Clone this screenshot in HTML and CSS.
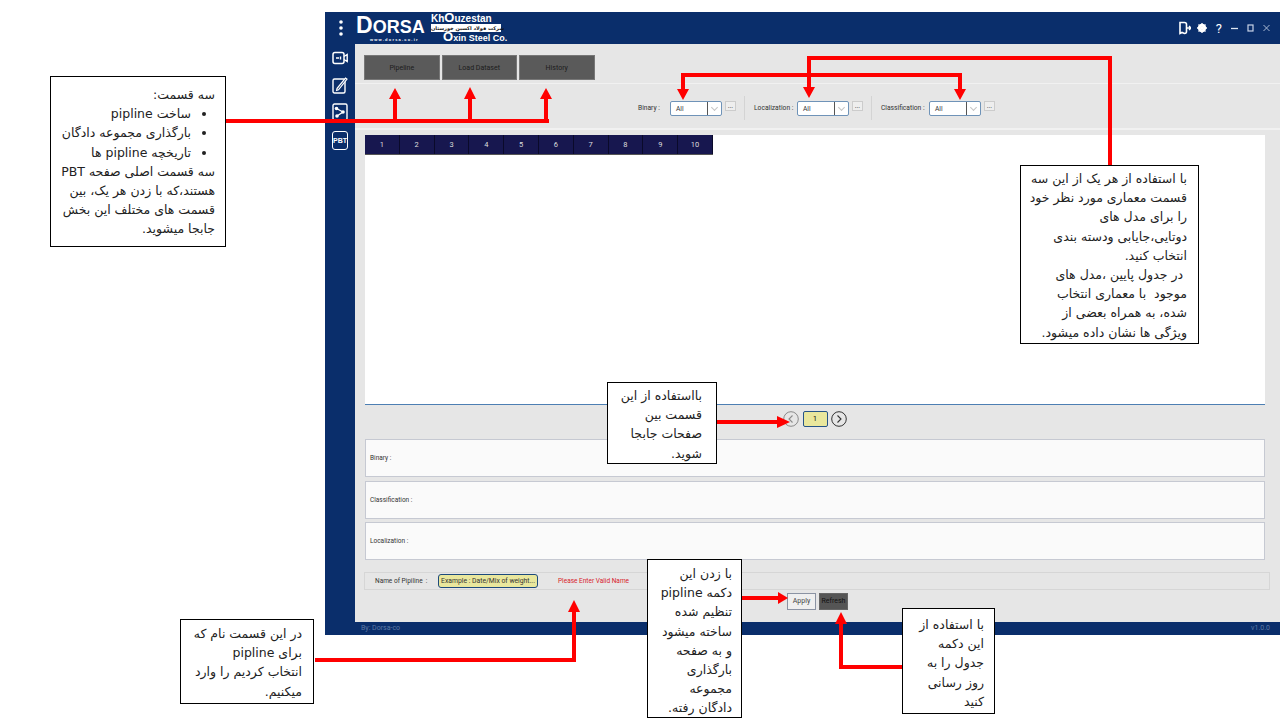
FILE: index.html
```html
<!DOCTYPE html>
<html>
  <head>
    <meta charset="utf-8">
    <link rel="stylesheet" href="styles.css">
  </head>
  <body>
    <div class="app">
      <div class="titlebar">
        <svg class="kebab" width="6" height="16" viewBox="0 0 6 16"><circle cx="3" cy="2" r="1.8"/><circle cx="3" cy="8" r="1.8"/><circle cx="3" cy="14" r="1.8"/></svg>
        <div class="dorsa">
          <span class="dorsa-name"><span class="dorsa-d">D</span>ORSA</span>
          <span class="dorsa-url">www.dorsa.co.ir</span>
        </div>
        <div class="oxin">
          <span class="oxin-top">Kh<span class="oxin-o">O</span>uzestan</span>
          <span class="oxin-fa">شرکت فولاد اکسین خوزستان</span>
          <span class="oxin-bottom"><span class="oxin-o">O</span>xin Steel Co.</span>
        </div>
        <div class="winbtns">
          <svg class="exit" width="12" height="14" viewBox="0 0 12 14"><path d="M1 1.5h4.5q2 0 2 2v7q0 2-2 2L3 11.5 1 12.5z" fill="none" stroke="#fff" stroke-width="1.6"/><path d="M7.5 7H12M10 5l2 2-2 2" fill="none" stroke="#fff" stroke-width="1.3"/></svg>
          <svg width="10" height="10" viewBox="0 0 10 10"><circle cx="5" cy="5" r="3" fill="none" stroke="#fff" stroke-width="2.4"/><path d="M5 0v10M0 5h10M1.5 1.5l7 7M8.5 1.5l-7 7" stroke="#fff" stroke-width="1.3"/></svg>
          <span class="help">?</span>
          <svg width="7" height="10" viewBox="0 0 7 10"><path d="M0 5.5h7" stroke="#dfe6f2" stroke-width="1.3"/></svg>
          <svg width="7" height="10" viewBox="0 0 7 10"><rect x="1" y="2" width="5" height="6" fill="none" stroke="#c8d3e6" stroke-width="1.2"/></svg>
          <svg width="7" height="10" viewBox="0 0 7 10"><path d="M.5 2l6 6M6.5 2l-6 6" stroke="#a9b9d4" stroke-width="1"/></svg>
        </div>
      </div>
      <div class="middle">
        <div class="rail">
          <svg width="16" height="16" viewBox="0 0 16 16"><rect x="1" y="2.5" width="11" height="11" rx="2" fill="none" stroke="#fff" stroke-width="1.5"/><path d="M12 6.5 15.2 4.5v7L12 9.5M4 8h3M8.5 6.5v3" fill="none" stroke="#fff" stroke-width="1.4"/></svg>
          <svg width="16" height="18" viewBox="0 0 16 18"><rect x="1" y="3" width="12" height="14" rx="1.5" fill="none" stroke="#fff" stroke-width="1.4"/><path d="M5 12.5 13.5 2 15 3.2 6.5 13.8 4.6 14.4z" fill="#0a2e6b" stroke="#fff" stroke-width="1.2"/></svg>
          <svg width="16" height="18" viewBox="0 0 16 18"><rect x="1" y="1" width="14" height="16" rx="1.5" fill="none" stroke="#fff" stroke-width="1.4"/><path d="M4.5 5.5 11 9 5 13" fill="none" stroke="#fff" stroke-width="1.3"/><circle cx="4.5" cy="5.5" r="1.8" fill="#fff"/><circle cx="11" cy="9" r="1.8" fill="#fff"/><circle cx="5" cy="13" r="1.8" fill="#fff"/></svg>
          <div class="pbt">PBT</div>
        </div>
        <div class="content">
          <div class="tabs">
            <div class="tab">Pipeline</div>
            <div class="tab">Load Dataset</div>
            <div class="tab">History</div>
          </div>
          <div class="filters">
            <span class="flabel">Binary :</span>
            <div class="combo"><span class="combo-val">All</span><span class="combo-arrow"></span></div>
            <div class="dots">...</div>
            <div class="fsep"></div>
            <span class="flabel">Localization :</span>
            <div class="combo"><span class="combo-val">All</span><span class="combo-arrow"></span></div>
            <div class="dots">...</div>
            <div class="fsep"></div>
            <span class="flabel">Classification :</span>
            <div class="combo"><span class="combo-val">All</span><span class="combo-arrow"></span></div>
            <div class="dots">...</div>
          </div>
          <div class="tablebox">
            <div class="thead">
              <div class="th">1</div><div class="th">2</div><div class="th">3</div><div class="th">4</div><div class="th">5</div>
              <div class="th">6</div><div class="th">7</div><div class="th">8</div><div class="th">9</div><div class="th">10</div>
            </div>
          </div>
          <div class="pager">
            <svg width="16" height="16" viewBox="0 0 16 16"><circle cx="8" cy="8" r="7.3" fill="none" stroke="#8a8a8a"/><path d="M9.5 4.5 6 8l3.5 3.5" fill="none" stroke="#8a8a8a" stroke-width="1.1"/></svg>
            <div class="pagenum">1</div>
            <svg width="16" height="16" viewBox="0 0 16 16"><circle cx="8" cy="8" r="7.3" fill="none" stroke="#333"/><path d="M6.5 4.5 10 8l-3.5 3.5" fill="none" stroke="#333" stroke-width="1.1"/></svg>
          </div>
          <div class="selrow">Binary :</div>
          <div class="selrow">Classification :</div>
          <div class="selrow">Localization :</div>
          <div class="namerow">
            <span class="namelabel">Name of Pipiline&nbsp; :</span>
            <div class="nameinput">Example : Date/Mix of weight...</div>
            <span class="nameerr">Please Enter Valid Name</span>
          </div>
          <div class="actions">
            <div class="btn-apply">Apply</div>
            <div class="btn-refresh">Refresh</div>
          </div>
        </div>
      </div>
      <div class="statusbar">
        <span>By: Dorsa-co</span>
        <span>v1.0.0</span>
      </div>
    </div>

    <svg class="arrows" width="1280" height="720" viewBox="0 0 1280 720">
      <g fill="none" stroke="#f00" stroke-width="4">
        <path d="M225 121H549"/>
        <path d="M395 119V98M470 119V98M546 119V98"/>
        <path d="M683 90V75H960V90"/>
        <path d="M809 90V58H1110V165"/>
        <path d="M717 422H778"/>
        <path d="M315 660H574V611"/>
        <path d="M741 598H778"/>
        <path d="M902 667H841V624"/>
      </g>
      <g fill="#f00">
        <path d="M395 88l6 11h-12zM470 87l6 12h-12zM546 88l6 11h-12z"/>
        <path d="M683 100l-6-11h12zM809 98l-6-11h12zM960 100l-6-11h12z"/>
        <path d="M790 422l-13 6v-12z"/>
        <path d="M574 600l6 12h-12z"/>
        <path d="M788 598l-10 6v-12z"/>
        <path d="M841 612l6 12h-12z"/>
      </g>
    </svg>

    <div class="note note-tabs" dir="rtl">
      سه قسمت:
      <ul>
        <li>ساخت pipline</li>
        <li>بارگذاری مجموعه دادگان</li>
        <li>تاریخچه pipline ها</li>
      </ul>
      سه قسمت اصلی صفحه PBT<br>
      هستند،که با زدن هر یک، بین<br>
      قسمت های مختلف این بخش<br>
      جابجا میشوید.
    </div>
    <div class="note note-filters" dir="rtl">
      با استفاده از هر یک از این سه<br>
      قسمت معماری مورد نظر خود<br>
      را برای مدل های<br>
      دوتایی،جایابی ودسته بندی<br>
      انتخاب کنید.<br>
      &nbsp;در جدول پایین ،مدل های<br>
      موجود&nbsp; با معماری انتخاب<br>
      شده، به همراه بعضی از<br>
      ویژگی ها نشان داده میشود.
    </div>
    <div class="note note-pager" dir="rtl">
      بااستفاده از این<br>
      قسمت بین<br>
      صفحات جابجا<br>
      شوید.
    </div>
    <div class="note note-apply" dir="rtl">
      با زدن این<br>
      دکمه pipline<br>
      تنظیم شده<br>
      ساخته میشود<br>
      و به صفحه<br>
      بارگذاری<br>
      مجموعه<br>
      دادگان رفته.
    </div>
    <div class="note note-refresh" dir="rtl">
      با استفاده از<br>
      این دکمه<br>
      جدول را به<br>
      روز رسانی<br>
      کنید
    </div>
    <div class="note note-name" dir="rtl">
      در این قسمت نام که<br>
      برای pipline<br>
      انتخاب کردیم را وارد<br>
      میکنیم.
    </div>
  </body>
</html>
```

FILE: styles.css
```css
body {
  margin: 0;
  width: 1280px;
  height: 720px;
  overflow: hidden;
  background: #fff;
  position: relative;
  font-family: Roboto, "Noto Sans", sans-serif;
}

.app {
  margin: 12px 0 0 325px;
  width: 955px;
  height: 623px;
  background: #0a2e6b;
  display: flex;
  flex-direction: column;
}

/* title bar */
.titlebar {
  height: 32px;
  display: flex;
  align-items: center;
  color: #fff;
}
.kebab {
  fill: #fff;
  flex-shrink: 0;
  margin-left: 13px;
}
.dorsa {
  margin-left: 12px;
  width: 75px;
  flex-shrink: 0;
  display: flex;
  flex-direction: column;
}
.dorsa-name {
  font: bold 18px/20px "Liberation Sans", sans-serif;
  white-space: nowrap;
}
.dorsa-d {
  font-size: 23px;
}
.dorsa-url {
  font: bold 4px/5px "Liberation Sans", sans-serif;
  letter-spacing: 1.2px;
  margin-left: 14px;
  white-space: nowrap;
}
.oxin {
  width: 70px;
  flex-shrink: 0;
  display: flex;
  flex-direction: column;
  white-space: nowrap;
  font: bold 9px/10px "Liberation Sans", sans-serif;
}
.oxin-top {
  font-size: 10px;
}
.oxin-o {
  font-size: 13px;
  line-height: 10px;
}
.oxin-fa {
  background: #fff;
  color: #111;
  font: bold 5px/8px "DejaVu Sans", sans-serif;
  text-align: center;
}
.oxin-bottom {
  margin-left: 12px;
}
.winbtns {
  margin-left: auto;
  margin-right: 10px;
  display: flex;
  align-items: center;
  gap: 9px;
}
.exit {
  margin-right: -3px;
}
.help {
  font: 13px Roboto, sans-serif;
}

.middle {
  flex: 1;
  display: flex;
  min-height: 0;
}

/* left rail */
.rail {
  width: 30px;
  padding-top: 6px;
  box-sizing: border-box;
  display: flex;
  flex-direction: column;
  align-items: center;
  gap: 9.5px;
}
.pbt {
  width: 14px;
  height: 17px;
  border: 1px solid #fff;
  border-radius: 3px;
  color: #fff;
  font: bold 7px/17px "Liberation Sans", sans-serif;
  text-align: center;
}

.content {
  flex: 1;
  background: #e6e6e6;
  padding: 11px 15px 0 9px;
  min-width: 0;
}

/* tabs */
.tabs {
  display: flex;
  gap: 2px;
  height: 28px;
  border-bottom: 1px solid #f1f1f1;
  margin-left: -9px;
  margin-right: -15px;
  padding-left: 9px;
}
.tab {
  width: 75.5px;
  height: 25px;
  background: #5a5a5a;
  border: 1px solid #777;
  box-sizing: border-box;
  color: #1c1c1c;
  font-size: 7px;
  line-height: 24px;
  text-align: center;
}

/* filters */
.filters {
  height: 40px;
  margin-left: -9px;
  margin-right: -15px;
  padding: 4px 0 0 283px;
  border-bottom: 2px solid #f1f1f1;
  display: flex;
  align-items: center;
  font-size: 6.7px;
  color: #333;
}
.flabel {
  margin-right: 4px;
  width: 39px;
  white-space: nowrap;
}
.flabel:first-child {
  width: 28px;
}
.flabel:nth-last-child(3) {
  width: 44px;
}
.combo {
  width: 52px;
  height: 15px;
  box-sizing: border-box;
  background: #fff;
  border: 1px solid #6f93b8;
  border-radius: 2px;
  display: flex;
}
.combo-val {
  flex: 1;
  padding-left: 5px;
  line-height: 14px;
}
.combo-arrow {
  width: 13px;
  border-left: 1px solid #555;
  position: relative;
}
.combo-arrow::after {
  content: "";
  position: absolute;
  left: 4px;
  top: 3px;
  width: 4px;
  height: 4px;
  border-right: 1px solid #c4c4c4;
  border-bottom: 1px solid #c4c4c4;
  transform: rotate(45deg);
}
.dots {
  width: 11px;
  height: 10px;
  margin: 0 0 4px 3px;
  background: #eee;
  border: 1px solid #ccc;
  box-sizing: border-box;
  line-height: 8px;
  text-align: center;
}
.fsep {
  width: 1px;
  height: 24px;
  background: #d4d4d4;
  margin: 0 9px 0 8px;
}

/* table */
.tablebox {
  margin-top: 5px;
  margin-left: 1px;
  height: 270px;
  background: #fff;
  border-bottom: 1px solid #4d7fb3;
  box-sizing: border-box;
}
.thead {
  width: 348px;
  height: 20px;
  display: flex;
  background: #17174f;
  border-bottom: 1px solid #555;
  box-sizing: border-box;
}
.th {
  flex: 1;
  color: #ddd;
  font-size: 7.5px;
  line-height: 19px;
  text-align: center;
  border-right: 1px solid #0a0a2a;
}

/* pager */
.pager {
  height: 28px;
  margin-left: 419px;
  display: flex;
  align-items: center;
  gap: 3.5px;
}
.pagenum {
  width: 25px;
  height: 16px;
  box-sizing: border-box;
  background: #e9e79d;
  border: 1px solid #265487;
  border-radius: 2px;
  font-size: 7px;
  line-height: 14px;
  text-align: center;
}

.selrow {
  margin: 3.5px 0 0 1px;
  height: 38px;
  box-sizing: border-box;
  background: #fafafa;
  border: 1px solid #c6c9d2;
  padding-left: 4px;
  font-size: 6.5px;
  line-height: 36px;
  color: #333;
}
.pager + .selrow {
  margin-top: 6px;
}

/* name row */
.namerow {
  margin: 12px -5px 0 0;
  height: 18px;
  border: 1px solid #d6d6d6;
  box-sizing: border-box;
  display: flex;
  align-items: center;
  padding-left: 10px;
  font-size: 6.5px;
  color: #333;
}
.namelabel {
  width: 63px;
}
.nameinput {
  width: 100px;
  height: 14px;
  box-sizing: border-box;
  background: #e9e79d;
  border: 1px solid #1d4a7c;
  border-radius: 3px;
  font-size: 6.8px;
  line-height: 12px;
  text-align: center;
  white-space: nowrap;
}
.nameerr {
  margin-left: 20px;
  color: #d81c2c;
}

.actions {
  margin: 3px 0 0 423px;
  display: flex;
  gap: 3px;
}
.btn-apply,
.btn-refresh {
  width: 29px;
  height: 17px;
  box-sizing: border-box;
  font-size: 7px;
  line-height: 15px;
  text-align: center;
}
.btn-apply {
  background: #efefef;
  border: 1px solid #8b93a3;
  color: #444;
}
.btn-refresh {
  background: #555;
  border: 1px solid #666;
  color: #111;
}

.statusbar {
  height: 13px;
  padding: 0 10px 0 36px;
  display: flex;
  justify-content: space-between;
  font-size: 7px;
  line-height: 13px;
  color: #5f7aa6;
}

/* annotations lying over the screenshot */
.arrows {
  position: absolute;
  left: 0;
  top: 0;
}
.note {
  position: absolute;
  box-sizing: border-box;
  background: #fff;
  border: 1px solid #000;
  padding: 6px 10px 0 0;
  color: #222;
  font: 12.5px/19.2px "DejaVu Sans", sans-serif;
  white-space: nowrap;
}
.note ul {
  margin: 0;
  padding: 0 24px 0 0;
}
.note-tabs { left: 50px; top: 76px; width: 176px; height: 171px; padding-top: 8px; }
.note-filters { left: 1020px; top: 165px; width: 179px; height: 179px; padding-top: 3px; padding-right: 11px; }
.note-pager { left: 607px; top: 382px; width: 110px; height: 82px; padding-top: 3px; padding-right: 14px; }
.note-apply { left: 647px; top: 559px; width: 95px; height: 159px; padding-top: 4px; padding-right: 9px; }
.note-refresh { left: 902px; top: 608px; width: 93px; height: 106px; }
.note-name { left: 180px; top: 619px; width: 134px; height: 85px; padding-top: 4px; padding-right: 11px; }
```
